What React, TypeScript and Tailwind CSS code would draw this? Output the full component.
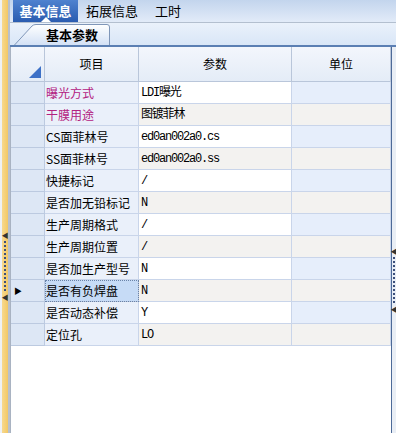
import React from 'react';

interface ParamRow {
  name: string;
  value: string;
  unit: string;
  highlight?: boolean;
}

const rows: ParamRow[] = [
  { name: '曝光方式', value: 'LDI曝光', unit: '', highlight: true },
  { name: '干膜用途', value: '图镀菲林', unit: '', highlight: true },
  { name: 'CS面菲林号', value: 'ed0an002a0.cs', unit: '' },
  { name: 'SS面菲林号', value: 'ed0an002a0.ss', unit: '' },
  { name: '快捷标记', value: '/', unit: '' },
  { name: '是否加无铅标记', value: 'N', unit: '' },
  { name: '生产周期格式', value: '/', unit: '' },
  { name: '生产周期位置', value: '/', unit: '' },
  { name: '是否加生产型号', value: 'N', unit: '' },
  { name: '是否有负焊盘', value: 'N', unit: '' },
  { name: '是否动态补偿', value: 'Y', unit: '' },
  { name: '定位孔', value: 'LO', unit: '' },
];

const SELECTED = 9;

const cjk = { fontFamily: '"Noto Sans CJK SC", "Liberation Sans", sans-serif' };
const mono = { fontFamily: '"Liberation Mono", "Noto Sans CJK SC", monospace', letterSpacing: '-1.2px' };

function Splitter({ gap }: { gap: number }) {
  return (
    <div className="flex flex-col items-center">
      <span className="text-[7px] leading-[8px] text-[#333]">◀</span>
      <div className="w-[2px] border-l-2 border-dotted border-[#3c4f7a] my-[2px]" style={{ height: gap }} />
      <span className="text-[7px] leading-[8px] text-[#333]">◀</span>
    </div>
  );
}

export default function App() {
  return (
    <div className="w-[396px] h-[433px] flex bg-white overflow-hidden text-[12px] text-black" style={cjk}>
      {/* left splitter */}
      <div className="w-[10px] h-full flex">
        <div className="w-[2px] h-full bg-[#eef1f5]" />
        <div className="w-[6px] h-full bg-gradient-to-r from-[#f7d98e] to-[#f2c865] flex flex-col pt-[231px]">
          <Splitter gap={50} />
        </div>
        <div className="w-[2px] h-full bg-[#b8c0cc]" />
      </div>

      <div className="flex-1 flex flex-col min-w-0">
        {/* top tab strip */}
        <div className="h-[23px] flex items-stretch bg-gradient-to-b from-[#c3d5ed] to-[#e2ebf8] border-b border-[#b3bfcf]">
          <div className="ml-[3px] w-[65px] relative flex items-center justify-center bg-gradient-to-b from-[#4f82cf] to-[#2a5cb0] text-white font-bold text-[13px]">
            基本信息
            <span className="absolute bottom-0 left-1/2 -translate-x-1/2 w-0 h-0 border-l-[5px] border-r-[5px] border-b-[5px] border-l-transparent border-r-transparent border-b-white" />
          </div>
          <div className="ml-[8px] flex items-center text-[13px]">拓展信息</div>
          <div className="ml-[17px] flex items-center text-[13px]">工时</div>
        </div>

        {/* sub tab strip */}
        <div className="h-[24px] flex items-end bg-gradient-to-b from-[#eaf1fb] to-[#d9e6f7] border-b-2 border-[#5b7fb3]">
          <div className="relative ml-[4px] h-[21px] w-[96px]">
            <svg className="absolute inset-0" width="96" height="21" viewBox="0 0 96 21">
              <defs>
                <linearGradient id="tabg" x1="0" y1="0" x2="0" y2="1">
                  <stop offset="0" stopColor="#ffffff" />
                  <stop offset="1" stopColor="#d3e1f5" />
                </linearGradient>
              </defs>
              <path d="M0.5 21 L18 2 Q19.5 0.5 22 0.5 L93 0.5 Q95.5 0.5 95.5 3 L95.5 21" fill="url(#tabg)" stroke="#7f96b8" />
            </svg>
            <span className="absolute inset-0 pl-[20px] flex items-center justify-center font-bold text-[13px]">基本参数</span>
          </div>
        </div>

        {/* grid */}
        <div className="flex-1 flex">
          <div className="flex-1 flex flex-col border-l border-[#a9b3c2] bg-white">
            <div className="grid grid-cols-[34px_94px_153px_99px]">
              {/* header */}
              <div className="h-[35px] relative bg-gradient-to-b from-[#f3f6fc] to-[#e4ecf7] border-r border-b border-[#b9c6da]">
                <svg className="absolute right-[3px] bottom-[3px]" width="12" height="12" viewBox="0 0 12 12">
                  <path d="M12 0 L12 12 L0 12 Z" fill="#3d71c7" />
                </svg>
              </div>
              {['项目', '参数', '单位'].map((h) => (
                <div
                  key={h}
                  className="h-[35px] flex items-center justify-center bg-gradient-to-b from-[#f3f6fc] to-[#e4ecf7] border-r border-b border-[#b9c6da]"
                >
                  {h}
                </div>
              ))}

              {rows.map((r, i) => {
                const odd = i % 2 === 1;
                const sel = i === SELECTED;
                return (
                  <React.Fragment key={r.name}>
                    <div className="h-[22px] flex items-center pl-[3px] bg-[#dde7f5] border-r border-b border-[#bccae0]">
                      {sel && <span className="text-[8px] leading-none">▶</span>}
                    </div>
                    <div
                      className={
                        'h-[22px] flex items-center pl-[1px] whitespace-nowrap border-r border-b ' +
                        (sel
                          ? 'bg-[#c6dbf6] border-[#bccae0] outline-1 outline-dotted outline-[#6a83a8] -outline-offset-1'
                          : 'bg-[#eaf0fa] border-[#c9d5ea]') +
                        (r.highlight ? ' text-[#b3207f]' : '')
                      }
                    >
                      {r.name}
                    </div>
                    <div
                      className={
                        'h-[22px] flex items-center pl-[2px] text-[12px] whitespace-nowrap border-r border-b border-[#c9d5ea] ' +
                        (odd ? 'bg-[#f3f2f0]' : 'bg-white')
                      }
                      style={mono}
                    >
                      {r.value}
                    </div>
                    <div
                      className={
                        'h-[22px] border-r border-b border-[#c9d5ea] ' + (odd ? 'bg-[#f3f2f0]' : 'bg-[#e6eefb]')
                      }
                    >
                      {r.unit}
                    </div>
                  </React.Fragment>
                );
              })}
            </div>
          </div>
          {/* right border + splitter */}
          <div className="w-[2px] bg-[#4d6a98]" />
          <div className="w-[4px] bg-[#e9eef5] flex flex-col pt-[200px]">
            <Splitter gap={46} />
          </div>
        </div>
      </div>
    </div>
  );
}
